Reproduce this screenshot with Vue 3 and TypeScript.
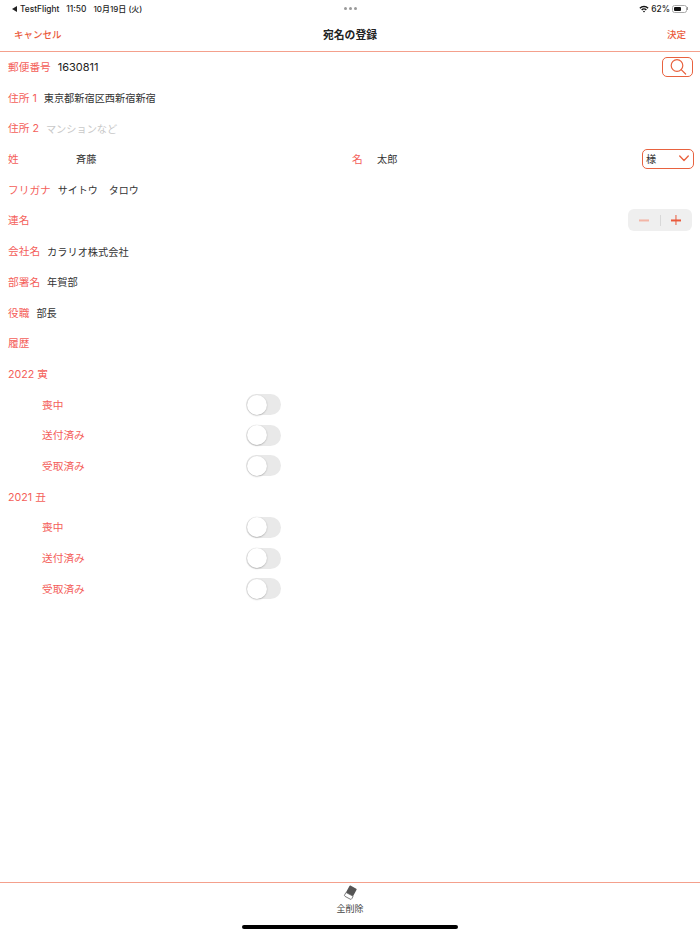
<script setup lang="ts">
type ToggleRow = { label: string; on: boolean };
type Year = { title: string; rows: ToggleRow[] };

const years: Year[] = [
  {
    title: '2022 寅',
    rows: [
      { label: '喪中', on: false },
      { label: '送付済み', on: false },
      { label: '受取済み', on: false },
    ],
  },
  {
    title: '2021 丑',
    rows: [
      { label: '喪中', on: false },
      { label: '送付済み', on: false },
      { label: '受取済み', on: false },
    ],
  },
];
</script>

<template>
  <div class="screen">
    <div class="status">
      <div class="status-left">
        <span class="back-tri"></span>
        <span>TestFlight</span>
        <span class="time">11:50</span>
        <span class="date">10月19日 (火)</span>
      </div>
      <div class="dots"><i></i><i></i><i></i></div>
      <div class="status-right">
        <svg class="wifi" width="10" height="8" viewBox="0 0 11 9">
          <path d="M0.3 3 A7.4 7.4 0 0 1 10.7 3 L9.5 4.2 A5.7 5.7 0 0 0 1.5 4.2 Z" fill="#111" />
          <path d="M2.3 5 A4.5 4.5 0 0 1 8.7 5 L7.5 6.2 A2.8 2.8 0 0 0 3.5 6.2 Z" fill="#111" />
          <path d="M4.3 7 A1.7 1.7 0 0 1 6.7 7 L5.5 8.3 Z" fill="#111" />
        </svg>
        <span>62%</span>
        <span class="battery"><span class="battery-fill"></span></span>
        <span class="battery-cap"></span>
      </div>
    </div>

    <header class="nav">
      <span class="nav-btn">キャンセル</span>
      <span class="nav-title">宛名の登録</span>
      <span class="nav-btn done">決定</span>
    </header>

    <main class="form">
      <div class="row">
        <span class="label">郵便番号</span>
        <span class="value zip">1630811</span>
        <button class="search" type="button">
          <svg width="18" height="18" viewBox="0 0 18 18" fill="none" stroke="#e8623f" stroke-width="1.2">
            <circle cx="8" cy="7.5" r="5.8" />
            <path d="M12.2 11.6 L16.6 16" stroke-linecap="round" />
          </svg>
        </button>
      </div>
      <div class="row">
        <span class="label">住所 1</span>
        <span class="value addr">東京都新宿区西新宿新宿</span>
      </div>
      <div class="row">
        <span class="label">住所 2</span>
        <span class="value addr placeholder">マンションなど</span>
      </div>
      <div class="row name-row">
        <span class="label name-label">姓</span>
        <span class="value family">斉藤</span>
        <span class="label given-label">名</span>
        <span class="value given">太郎</span>
        <div class="honorific">
          <span>様</span>
          <svg width="10" height="7" viewBox="0 0 11 7" fill="none" stroke="#e8623f" stroke-width="1.5">
            <path d="M0.8 0.8 L5.5 5.6 L10.2 0.8" stroke-linecap="round" stroke-linejoin="round" />
          </svg>
        </div>
      </div>
      <div class="row">
        <span class="label">フリガナ</span>
        <span class="value kana">サイトウ</span>
        <span class="value kana-given">タロウ</span>
      </div>
      <div class="row">
        <span class="label">連名</span>
        <div class="stepper">
          <span class="step minus"></span>
          <span class="step-sep"></span>
          <span class="step plus"></span>
        </div>
      </div>
      <div class="row">
        <span class="label">会社名</span>
        <span class="value company">カラリオ株式会社</span>
      </div>
      <div class="row">
        <span class="label">部署名</span>
        <span class="value company">年賀部</span>
      </div>
      <div class="row">
        <span class="label">役職</span>
        <span class="value role">部長</span>
      </div>
      <div class="row">
        <span class="label">履歴</span>
      </div>

      <template v-for="y in years" :key="y.title">
        <div class="row">
          <span class="label">{{ y.title }}</span>
        </div>
        <div v-for="r in y.rows" :key="r.label" class="row sub">
          <span class="label sub-label">{{ r.label }}</span>
          <span class="switch" :class="{ on: r.on }"><span class="knob"></span></span>
        </div>
      </template>
    </main>

    <footer class="toolbar">
      <svg class="eraser" width="15" height="15" viewBox="0 0 16 16">
        <g transform="rotate(28 8 8)">
          <rect x="3.7" y="1.5" width="8.6" height="9" rx="0.8" fill="#555" />
          <path d="M3.7 10.2 H12.3 V13.2 Q12.3 14.4 11.2 14.4 H4.8 Q3.7 14.4 3.7 13.2 Z" fill="#fff" stroke="#666" stroke-width="0.8" />
        </g>
      </svg>
      <span class="toolbar-label">全削除</span>
      <span class="home-bar"></span>
    </footer>
  </div>
</template>

<style>
html,
body {
  margin: 0;
  background: #fff;
}
</style>

<style scoped>
.screen {
  width: 700px;
  height: 934px;
  display: flex;
  flex-direction: column;
  overflow: hidden;
  background: #fff;
  font-family: Inter, "Noto Sans CJK JP", sans-serif;
  color: #333;
}

.status {
  height: 17px;
  padding: 0 12px;
  display: grid;
  grid-template-columns: 1fr auto 1fr;
  align-items: center;
  font-size: 8.4px;
  font-weight: 500;
  color: #222;
}

.status-left {
  display: flex;
  align-items: center;
  gap: 7px;
}

.back-tri {
  width: 0;
  height: 0;
  margin-right: -4px;
  border-top: 3px solid transparent;
  border-bottom: 3px solid transparent;
  border-right: 5px solid #222;
}

.date {
  font-size: 8px;
}

.dots {
  display: flex;
  gap: 2px;
}

.dots i {
  width: 3px;
  height: 3px;
  border-radius: 50%;
  background: #9a9a9a;
}

.status-right {
  display: flex;
  align-items: center;
  justify-content: flex-end;
  gap: 2px;
}

.battery {
  width: 15px;
  height: 8px;
  padding: 1px;
  margin-right: -2px;
  box-sizing: border-box;
  border: 1px solid #aaa;
  border-radius: 2.5px;
  display: flex;
}

.battery-fill {
  width: 66%;
  background: #111;
  border-radius: 1px;
}

.battery-cap {
  width: 1px;
  height: 3px;
  background: #999;
}

.nav {
  height: 34px;
  padding: 0 14px;
  display: grid;
  grid-template-columns: 1fr auto 1fr;
  align-items: center;
  border-bottom: 1px solid #f4a08c;
}

.nav-btn {
  font-size: 9.5px;
  font-weight: 500;
  color: #ea5a3c;
}

.done {
  justify-self: end;
}

.nav-title {
  font-size: 10.8px;
  font-weight: 700;
  color: #222;
}

.form {
  flex: 1;
  margin-top: -0.3px;
}

.row {
  height: 30.7px;
  padding: 0 8px;
  display: flex;
  align-items: center;
  font-size: 10.2px;
}

.name-row {
  padding-bottom: 1px;
  box-sizing: border-box;
}

.label {
  font-size: 10.7px;
  color: #f4605a;
  flex: none;
  margin-top: -1px;
}

.value {
  flex: none;
}

.zip {
  margin-left: 7px;
  font-size: 11px;
  color: #222;
}

.search {
  width: 31px;
  height: 20px;
  margin-left: auto;
  margin-right: -1px;
  padding: 0;
  border: 1.2px solid #e8623f;
  border-radius: 5px;
  background: #fff;
  display: flex;
  align-items: center;
  justify-content: center;
}

.addr {
  margin-left: 7px;
}

.placeholder {
  color: #c8c8c8;
}

.name-label {
  width: 68px;
}

.family {
  width: 276px;
}

.given-label {
  width: 25px;
}

.given {
  width: 245px;
}

.honorific {
  width: 52px;
  height: 20px;
  box-sizing: border-box;
  margin-left: auto;
  margin-right: -2px;
  padding: 0 4px 0 3px;
  border: 1.5px solid #e8623f;
  border-radius: 5px;
  display: flex;
  align-items: center;
  justify-content: space-between;
}

.kana {
  margin-left: 7px;
  font-size: 10px;
}

.kana-given {
  margin-left: 11px;
  font-size: 10px;
}

.stepper {
  width: 64px;
  height: 22px;
  margin-left: auto;
  border-radius: 6px;
  background: #efefef;
  display: flex;
  align-items: center;
}

.step {
  flex: 1;
  height: 100%;
  position: relative;
}

.step::before,
.plus::after {
  content: "";
  position: absolute;
  left: 50%;
  top: 50%;
  width: 10px;
  height: 1.1px;
  transform: translate(-50%, -50%);
  background: #ea5a3c;
}

.minus::before {
  background: #f3b5a6;
}

.plus::after {
  width: 1.1px;
  height: 10px;
}

.step-sep {
  width: 1px;
  height: 11px;
  background: #d8d8d8;
}

.company {
  margin-left: 7px;
}

.role {
  margin-left: 7px;
}

.sub {
  padding-left: 42px;
}

.sub-label {
  width: 204px;
}

.switch {
  width: 35px;
  height: 21px;
  border-radius: 11px;
  background: #e9e9e9;
  display: block;
  position: relative;
}

.switch.on {
  background: #ea5a3c;
}

.knob {
  position: absolute;
  left: 0.5px;
  top: 0.5px;
  width: 20px;
  height: 20px;
  box-sizing: border-box;
  border-radius: 50%;
  background: #fff;
  box-shadow: 0 0.5px 1.5px rgba(0, 0, 0, 0.3);
}

.toolbar {
  height: 51px;
  border-top: 1px solid #f4a08c;
  display: flex;
  flex-direction: column;
  align-items: center;
  position: relative;
}

.eraser {
  margin-top: 2px;
}

.toolbar-label {
  margin-top: 2px;
  font-size: 9px;
  color: #444;
}

.home-bar {
  position: absolute;
  left: 242px;
  bottom: 5.5px;
  width: 216px;
  height: 3.5px;
  border-radius: 2px;
  background: #000;
}
</style>
